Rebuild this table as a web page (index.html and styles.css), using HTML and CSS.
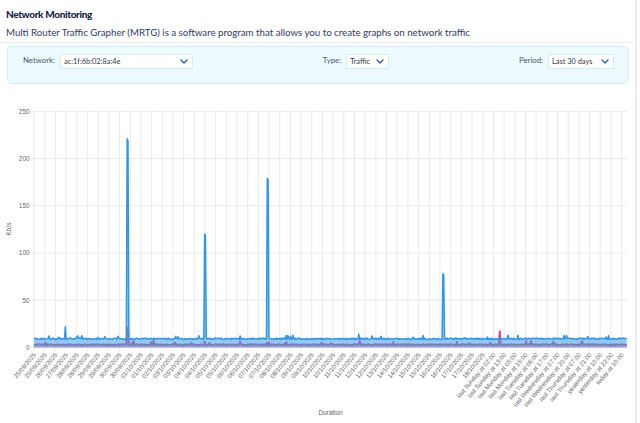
FILE: index.html
```html
<!DOCTYPE html>
<html lang="en">
<head>
<meta charset="utf-8">
<title>Network Monitoring</title>
<link rel="stylesheet" href="styles.css">
</head>
<body>
<div class="page">
  <main class="content">
    <header class="head">
      <h1 class="title">Network Monitoring</h1>
      <p class="desc">Multi Router Traffic Grapher (MRTG) is a software program that allows you to create graphs on network traffic</p>
    </header>
    <section class="filters">
      <div class="field">
        <span class="label">Network:</span>
        <div class="select sel-net">
          <span>ac:1f:6b:02:8a:4e</span>
          <svg class="chev" width="8" height="5" viewBox="0 0 8 5"><path d="M1 1 L4 4 L7 1" fill="none" stroke="#2a5bd0" stroke-width="1.4" stroke-linecap="round" stroke-linejoin="round"/></svg>
        </div>
      </div>
      <div class="field">
        <span class="label">Type:</span>
        <div class="select sel-type">
          <span>Traffic</span>
          <svg class="chev" width="8" height="5" viewBox="0 0 8 5"><path d="M1 1 L4 4 L7 1" fill="none" stroke="#2a5bd0" stroke-width="1.4" stroke-linecap="round" stroke-linejoin="round"/></svg>
        </div>
      </div>
      <div class="field">
        <span class="label">Period:</span>
        <div class="select sel-period">
          <span>Last 30 days</span>
          <svg class="chev" width="8" height="5" viewBox="0 0 8 5"><path d="M1 1 L4 4 L7 1" fill="none" stroke="#2a5bd0" stroke-width="1.4" stroke-linecap="round" stroke-linejoin="round"/></svg>
        </div>
      </div>
    </section>
    <div class="chart">
      <svg id="chart" class="chart-svg" width="634" height="330" viewBox="0 93 634 330"></svg>
    </div>
  </main>
  <div class="scrollbar"></div>
</div>
<script src="script.js"></script>
</body>
</html>
```

FILE: styles.css
```css
html, body {
  margin: 0;
  padding: 0;
  background: #ffffff;
}
body {
  font-family: Lato, "Noto Sans", Arial, sans-serif;
  color: #2e3a62;
}
.page {
  display: flex;
  width: 640px;
  height: 423px;
  overflow: hidden;
}
.content {
  width: 634px;
  flex: none;
}
.scrollbar {
  width: 2px;
  margin-left: 1px;
  background: #ebebf7;
}
.head {
  padding: 7px 6px 3px;
  border-bottom: 1px solid #ebebef;
}
.title {
  margin: 0;
  font-size: 10px;
  line-height: 14px;
  font-weight: 900;
  letter-spacing: -0.35px;
  color: #18224f;
}
.desc {
  margin: 4px 0 0;
  font-size: 9.7px;
  line-height: 14px;
  color: #2f3b66;
}
.filters {
  box-sizing: border-box;
  height: 38px;
  margin: 3px 5px 0 7px;
  padding: 7px 14px 0 15px;
  background: #edfbfe;
  border: 1px solid #d0f0f9;
  border-radius: 5px;
  display: flex;
  justify-content: space-between;
  align-items: flex-start;
}
.field {
  display: flex;
  align-items: flex-start;
  gap: 5px;
}
.label {
  font-size: 7.8px;
  line-height: 12px;
  color: #4a5472;
}
.select {
  box-sizing: border-box;
  height: 15px;
  background: #ffffff;
  border: 1px solid #d4eef8;
  display: flex;
  align-items: center;
  justify-content: space-between;
  padding: 0 4px 0 3px;
  font-size: 7.4px;
  color: #333a4a;
}
.sel-net { width: 133px; }
.sel-type { width: 43px; }
.sel-period { width: 66px; }
.chev { display: block; }
.chart {
  margin-top: 8px;
}
.chart-svg {
  display: block;
  font-family: "Liberation Sans", Arial, sans-serif;
}
```

FILE: script.js
```js
(function () {
  var NS = 'http://www.w3.org/2000/svg';
  var svg = document.getElementById('chart');
  var L = 34, R = 626.7, T = 112.3, B = 348.5;
  function ys(v) { return B - v * (B - T) / 250; }
  function el(tag, attrs, text) {
    var e = document.createElementNS(NS, tag);
    for (var k in attrs) e.setAttribute(k, attrs[k]);
    if (text !== undefined) e.textContent = text;
    svg.appendChild(e);
    return e;
  }
  var grid = '#e6e6e6';
  for (var v = 0; v <= 250; v += 50) {
    var y = ys(v);
    el('line', { x1: 30.5, x2: R, y1: y, y2: y, stroke: grid, 'stroke-width': 0.8 });
    el('text', { x: 29.5, y: y + 2.3, 'text-anchor': 'end', 'font-size': 6.4, fill: '#666' }, String(v));
  }
  var labels = [
    '25/09/2025','25/09/2025','26/09/2025','27/09/2025','28/09/2025','28/09/2025','29/09/2025','29/09/2025',
    '30/09/2025','30/09/2025','01/10/2025','01/10/2025','02/10/2025','03/10/2025','03/10/2025','04/10/2025',
    '04/10/2025','05/10/2025','05/10/2025','06/10/2025','06/10/2025','07/10/2025','07/10/2025','08/10/2025',
    '08/10/2025','09/10/2025','09/10/2025','10/10/2025','10/10/2025','11/10/2025','11/10/2025','12/10/2025',
    '12/10/2025','13/10/2025','14/10/2025','14/10/2025','15/10/2025','15/10/2025','16/10/2025','16/10/2025',
    '17/10/2025','17/10/2025','18/10/2025',
    'last Sunday at 02:00','last Sunday at 13:00','last Monday at 05:00','last Monday at 15:00',
    'last Tuesday at 06:00','last Tuesday at 17:00','last Wednesday at 07:00','last Wednesday at 20:00',
    'last Thursday at 07:00','last Thursday at 21:00','yesterday at 10:00','yesterday at 22:00','today at 10:00'
  ];
  var nT = labels.length;
  var lastX = 621.6;
  var dx = (lastX - L) / (nT - 1);
  for (var i = 0; i < nT; i++) {
    var x = L + i * dx;
    el('line', { x1: x, x2: x, y1: T, y2: B + 3.5, stroke: i === 0 ? '#dcdcdc' : grid, 'stroke-width': 0.8 });
    el('text', {
      transform: 'translate(' + (x + 1.2).toFixed(2) + ',355) rotate(-50)',
      'text-anchor': 'end', 'dominant-baseline': 'middle', 'font-size': 6.2, fill: '#666'
    }, labels[i]);
  }
  var seed = 12345;
  function rnd() { seed = (seed * 1103515245 + 12345) % 2147483648; return seed / 2147483648; }
  var N = 720;
  var step = (R - L) / (N - 1);
  var blue = [], pink = [];
  for (var j = 0; j < N; j++) {
    var b = 8.4 + rnd() * 1.6;
    if (rnd() < 0.05) b += 1.5 + rnd() * 2;
    var p = 2.4 + rnd() * 1.1;
    if (rnd() < 0.03) p += 1.5 + rnd() * 2.5;
    blue.push(b); pink.push(p);
  }
  function idx(px) { return Math.round((px - L) / step); }
  function spike(arr, px, val, wide) {
    var k = idx(px);
    arr[k] = val;
    if (wide) arr[k + 1] = val * 0.99;
  }
  spike(blue, 65, 22, false);
  spike(blue, 127.5, 221, true);
  spike(blue, 205, 120, true);
  spike(blue, 267, 179, true);
  spike(blue, 443, 78, true);
  spike(blue, 359, 14, false);
  spike(blue, 518, 13, false);
  spike(blue, 199, 12.5, false);
  spike(blue, 290, 12, false);
  spike(pink, 127.5, 21, true);
  spike(pink, 500, 17, false);
  spike(pink, 205, 6, false);
  spike(pink, 359.5, 7, false);
  spike(pink, 553, 6, false);
  spike(pink, 267, 5, false);
  spike(pink, 491, 5, false);
  function linePath(arr) {
    var d = '';
    for (var q = 0; q < arr.length; q++) {
      d += (q ? 'L' : 'M') + (L + q * step).toFixed(2) + ' ' + ys(arr[q]).toFixed(2);
    }
    return d;
  }
  function areaPath(arr) {
    return linePath(arr) + 'L' + R + ' ' + B + 'L' + L + ' ' + B + 'Z';
  }
  el('path', { d: areaPath(pink), fill: 'rgba(255,99,132,0.5)' });
  el('path', { d: linePath(pink), fill: 'none', stroke: 'rgb(225,70,130)', 'stroke-width': 2, 'stroke-linejoin': 'round' });
  el('path', { d: areaPath(blue), fill: 'rgba(54,162,235,0.55)' });
  el('path', { d: linePath(blue), fill: 'none', stroke: 'rgb(48,150,232)', 'stroke-width': 1.5, 'stroke-linejoin': 'round' });
  el('text', { transform: 'translate(11,230) rotate(-90)', 'text-anchor': 'middle', 'font-size': 6.4, fill: '#666' }, 'Kb/s');
  el('text', { x: 330.5, y: 415.5, 'text-anchor': 'middle', 'font-size': 6.4, fill: '#666' }, 'Duration');
})();
```
